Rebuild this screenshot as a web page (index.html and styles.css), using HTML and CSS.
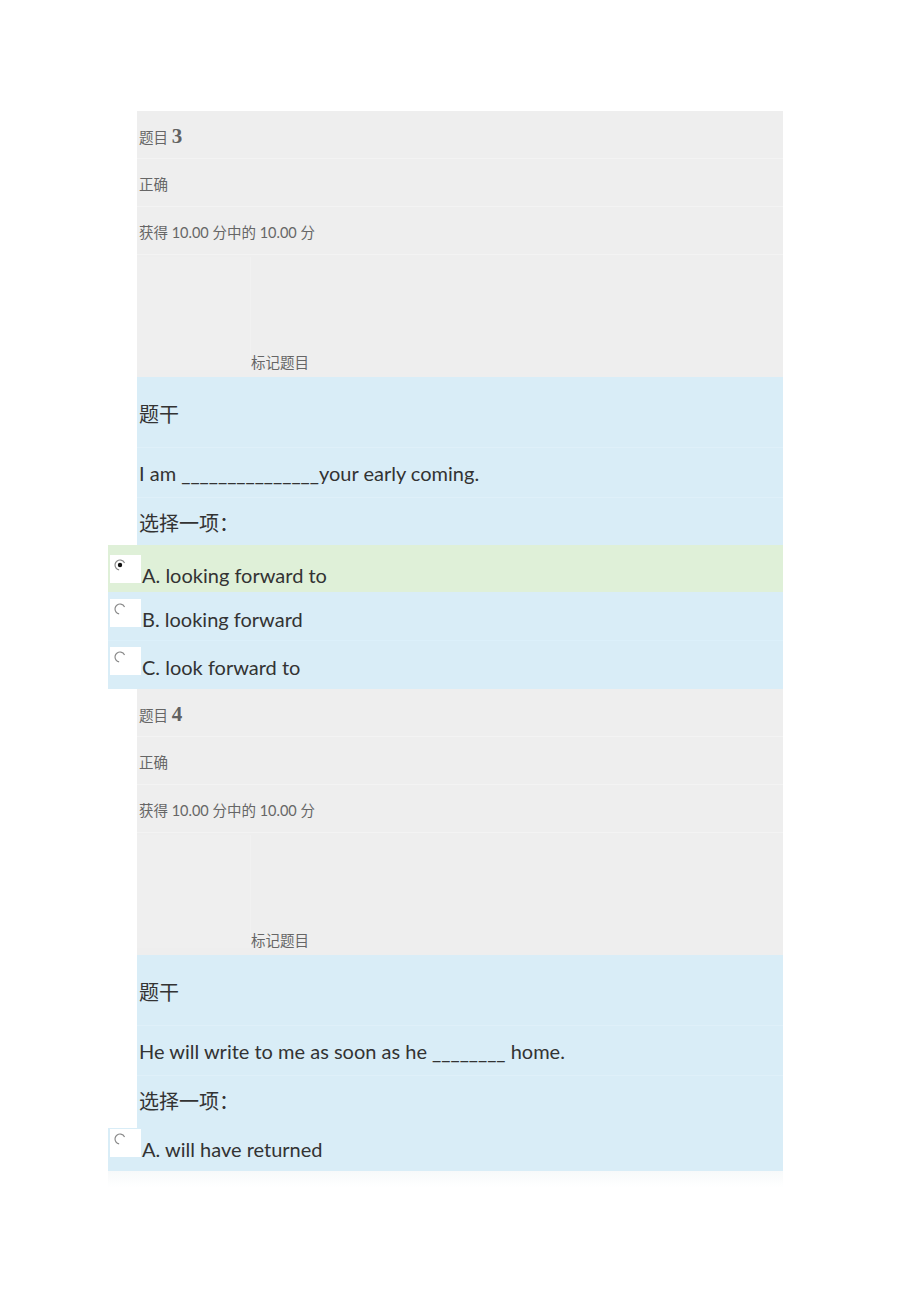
FILE: index.html
```html
<!DOCTYPE html>
<html lang="zh-CN">
<head>
<meta charset="utf-8">
<title>测验</title>
<link rel="stylesheet" href="styles.css">
</head>
<body>
<div class="page">
  <section class="q">
    <div class="info">
      <div class="info-row qno">题目 <span class="num">3</span></div>
      <div class="info-row">正确</div>
      <div class="info-row">获得 10.00 分中的 10.00 分</div>
      <div class="flag"><div class="flag-box"></div><span class="flag-text">标记题目</span></div>
    </div>
    <div class="content">
      <div class="crow head">题干</div>
      <div class="crow">I am _______________your early coming.</div>
      <div class="crow last">选择一项<span class="punct">：</span></div>
    </div>
    <div class="answers">
      <div class="opt opt-a sel">
        <span class="radio-box"><svg width="14" height="14" viewBox="0 0 14 14"><circle cx="7" cy="7" r="5" fill="#fff" stroke="#8a8a8a" stroke-width="1.2" stroke-dasharray="20 12" transform="rotate(100 7 7)"/><circle cx="7" cy="7" r="2.2" fill="#111"/></svg></span>
        <span class="opt-text">A. looking forward to</span>
      </div>
      <div class="opt opt-b">
        <span class="radio-box"><svg width="14" height="14" viewBox="0 0 14 14"><circle cx="7" cy="7" r="5" fill="#fff" stroke="#8a8a8a" stroke-width="1.2" stroke-dasharray="20 12" transform="rotate(100 7 7)"/></svg></span>
        <span class="opt-text">B. looking forward</span>
      </div>
      <div class="opt opt-c">
        <span class="radio-box"><svg width="14" height="14" viewBox="0 0 14 14"><circle cx="7" cy="7" r="5" fill="#fff" stroke="#8a8a8a" stroke-width="1.2" stroke-dasharray="20 12" transform="rotate(100 7 7)"/></svg></span>
        <span class="opt-text">C. look forward to</span>
      </div>
    </div>
  </section>
  <section class="q">
    <div class="info">
      <div class="info-row qno">题目 <span class="num">4</span></div>
      <div class="info-row">正确</div>
      <div class="info-row">获得 10.00 分中的 10.00 分</div>
      <div class="flag"><div class="flag-box"></div><span class="flag-text">标记题目</span></div>
    </div>
    <div class="content tall">
      <div class="crow head">题干</div>
      <div class="crow">He will write to me as soon as he ________ home.</div>
      <div class="crow last">选择一项<span class="punct">：</span></div>
    </div>
    <div class="answers">
      <div class="opt opt-last">
        <span class="radio-box"><svg width="14" height="14" viewBox="0 0 14 14"><circle cx="7" cy="7" r="5" fill="#fff" stroke="#8a8a8a" stroke-width="1.2" stroke-dasharray="20 12" transform="rotate(100 7 7)"/></svg></span>
        <span class="opt-text">A. will have returned</span>
      </div>
    </div>
  </section>
  <div class="shadow"></div>
</div>
</body>
</html>
```

FILE: styles.css
```css
html, body {
  margin: 0;
  padding: 0;
  background: #fff;
}
body {
  font-family: "Noto Sans CJK SC", sans-serif;
}
.page {
  width: 675px;
  margin-left: 108px;
  padding-top: 111px;
}
.info {
  margin-left: 29px;
  background: #eeeeee;
  color: #666;
  font-size: 14.5px;
}
.info-row {
  height: 47px;
  line-height: 51px;
  padding-left: 2px;
  border-bottom: 1px solid #f3f3f3;
  font-family: "Lato", "Noto Sans CJK SC", sans-serif;
}
.qno .num {
  font-family: "Liberation Serif", serif;
  font-weight: bold;
  font-size: 21px;
  color: #616161;
}
.flag {
  height: 122px;
  display: flex;
  align-items: flex-end;
}
.flag-box {
  width: 113px;
  height: 113px;
  margin-bottom: 7px;
  background: #efefef;
  border-right: 1px solid #f1f1f1;
}
.flag-text {
  line-height: 20px;
  padding-bottom: 5px;
  color: #666;
  font-size: 14.5px;
}
.content {
  margin-left: 29px;
  background: #d9edf7;
  color: #333;
  font-family: "Lato", "Noto Sans CJK SC", sans-serif;
  font-size: 20px;
}
.punct {
  font-family: "Noto Sans CJK TC", "Noto Sans CJK SC", sans-serif;
}
.crow {
  padding-left: 2px;
  height: 49px;
  line-height: 50px;
  border-bottom: 1px solid #dff0f9;
}
.crow.head {
  height: 70px;
  line-height: 75px;
}
.crow.last {
  height: 47px;
  border-bottom: 0;
}
.content.tall .crow.head {
  height: 70px;
  line-height: 74px;
}
.content.tall .crow.last {
  height: 52px;
  line-height: 50px;
}
.answers {
  font-family: "Lato", "Noto Sans CJK SC", sans-serif;
  font-size: 20px;
  color: #333;
}
.opt {
  display: flex;
  align-items: flex-start;
  background: #d9edf7;
}
.opt-a {
  height: 47px;
  background: #dff0d8;
  --top: 10px;
}
.opt-b {
  height: 48px;
  border-bottom: 1px solid #dcf0fa;
  --top: 7px;
}
.opt-c {
  height: 48px;
  --top: 6px;
}
.opt-last {
  height: 43px;
  --top: 1px;
}
.radio-box {
  width: 31px;
  height: 28px;
  margin-left: 2px;
  margin-top: var(--top);
  background: #fff;
  position: relative;
}
.radio-box svg {
  position: absolute;
  left: 3px;
  top: 3px;
}
.opt-text {
  margin-left: 1px;
  margin-top: calc(var(--top) + 6px);
  line-height: 28px;
}
.shadow {
  height: 16px;
  background: linear-gradient(#f7f9fa, #ffffff);
}
```
